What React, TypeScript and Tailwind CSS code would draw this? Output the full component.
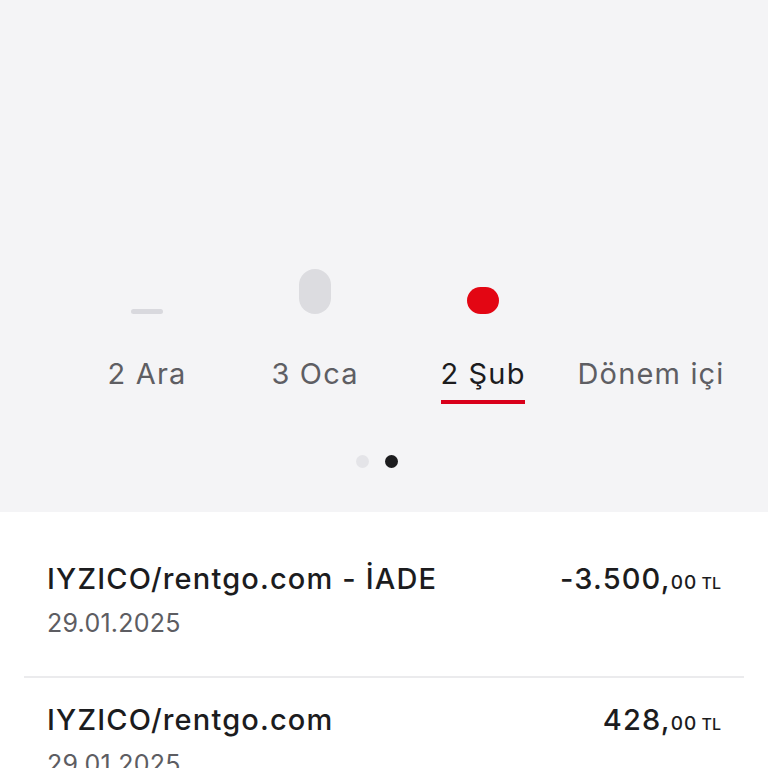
import React from "react";

const columns = [
  { label: "2 Ara", bar: "h-[5px] w-8 bg-[#d9d9de]", active: false },
  { label: "3 Oca", bar: "h-[45px] w-8 bg-[#dcdce0]", active: false },
  { label: "2 Şub", bar: "h-[27px] w-8 bg-[#e30613]", active: true },
  { label: "Dönem içi", bar: "", active: false },
];

const transactions = [
  { title: "IYZICO/rentgo.com - İADE", date: "29.01.2025", whole: "-3.500", cents: "00" },
  { title: "IYZICO/rentgo.com", date: "29.01.2025", whole: "428", cents: "00" },
];

export default function App() {
  return (
    <div
      className="w-[768px] h-[768px] overflow-hidden bg-white"
      style={{ fontFamily: "Inter, 'Noto Sans', sans-serif" }}
    >
      {/* Chart area */}
      <div className="h-[512px] bg-[#f4f4f6] flex flex-col">
        <div className="pt-[269px] pl-[63px] flex">
          {columns.map((c) => (
            <div key={c.label} className="w-[168px] flex flex-col items-center">
              <div className="h-[45px] flex items-end">
                {c.bar && <div className={`${c.bar} rounded-full`} />}
              </div>
              <div
                className={`mt-[43px] text-[29px] leading-[34px] tracking-[0.04em] ${
                  c.active ? "text-[#1c1c1e]" : "text-[#5e5e63]"
                }`}
              >
                {c.label}
              </div>
              <div
                className={`mt-[9px] h-[4px] w-[84px] ${
                  c.active ? "bg-[#d9001b]" : "bg-transparent"
                }`}
              />
            </div>
          ))}
        </div>
        <div className="mt-[51px] flex justify-center gap-4 pr-[15px]">
          <div className="w-[13px] h-[13px] rounded-full bg-[#e4e4e8]" />
          <div className="w-[13px] h-[13px] rounded-full bg-[#1c1c1e]" />
        </div>
      </div>

      {/* Transactions */}
      <div className="px-6 pt-[24px]">
        {transactions.map((t, i) => (
          <div
            key={i}
            className={`px-[23px] ${i === 0 ? "pt-[26px]" : "pt-[25px]"} pb-[38px] flex justify-between ${
              i === 0 ? "border-b-2 border-[#ebebed]" : ""
            }`}
          >
            <div>
              <div className="text-[29px] leading-[34px] tracking-[0.04em] font-medium text-[#1c1c1e]">
                {t.title}
              </div>
              <div className="mt-[12px] text-[25px] leading-[30px] tracking-[0.01em] text-[#5d5d62]">
                {t.date}
              </div>
            </div>
            <div className="text-[29px] leading-[34px] tracking-[0.04em] font-medium text-[#1c1c1e] whitespace-nowrap">
              {t.whole},<span className="text-[19px] tracking-[0.06em]">{t.cents}</span>
              <span className="text-[16px] ml-[4px] tracking-normal">TL</span>
            </div>
          </div>
        ))}
      </div>
    </div>
  );
}
